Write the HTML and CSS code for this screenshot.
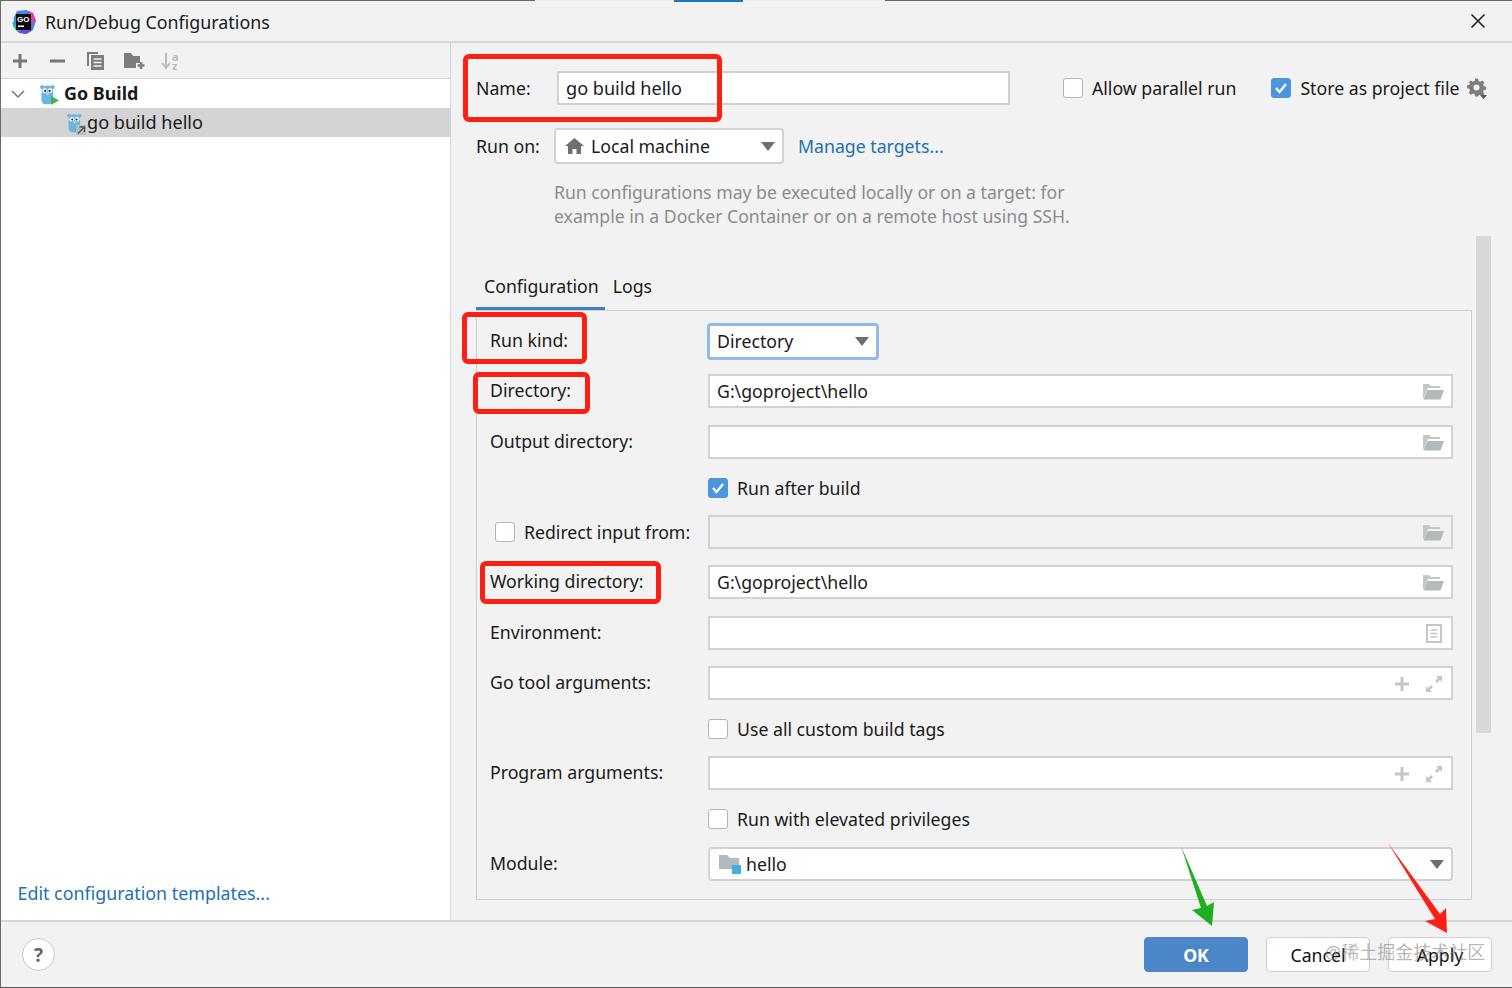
FILE: index.html
```html
<!DOCTYPE html>
<html lang="en">
<head>
<meta charset="utf-8">
<title>Run/Debug Configurations</title>
<link rel="stylesheet" href="styles.css">
</head>
<body>
<svg class="defs" width="0" height="0" aria-hidden="true">
  <defs>
    <symbol id="folder" viewBox="0 0 22 17"><path d="M1 1h6l2 2h9v2H6L2 15H1z" fill="#c3c7ca"/><path d="M5.500 7H22l-3.500 9.500H1.500z" fill="#b4b9bc"/></symbol>
    <symbol id="gopher" viewBox="0 0 20 24"><path d="M3.500 6C1 5 .5 1.500 3 1c1.200-.2 2.200.4 2.800 1.300C7.800 1.300 12 1.300 14 2.300 14.600 1.400 15.600.8 16.800 1c2.500.5 2 4-.5 5 .7 4 .7 9 .2 13-.5 3.500-2.500 4.500-6.800 4.500S3.500 22.500 3 19C2.600 15 2.800 10 3.500 6z" fill="#6db6e4"/><circle cx="6.800" cy="7.500" r="2.800" fill="#fff"/><circle cx="13" cy="7.500" r="2.800" fill="#fff"/><circle cx="7.300" cy="7.800" r="1.300" fill="#1c2530"/><circle cx="12.500" cy="7.800" r="1.300" fill="#1c2530"/><rect x="8.800" y="10" width="2.400" height="2.200" fill="#e8dcc8"/></symbol>
    <symbol id="caret" viewBox="0 0 14 9"><path d="M0 0h14L7 9z" fill="#6e6e6e"/></symbol>
    <symbol id="plus" viewBox="0 0 16 16"><path d="M8 1v14M1 8h14" stroke="currentColor" stroke-width="3"/></symbol>
    <symbol id="expand" viewBox="0 0 18 18"><path d="M11 1h6v6l-2-2-3 3-2-2 3-3zM7 17H1v-6l2 2 3-3 2 2-3 3z" fill="#c4c7c9"/></symbol>
  </defs>
</svg>
<div class="top-strip seg-a"></div>
<div class="top-strip seg-b"></div>
<div class="top-strip seg-c"></div>
<div class="window">
  <header class="titlebar">
    <svg class="logo" width="24" height="24" viewBox="0 0 24 24"><path d="M5 1l9-1 7 3 3 8-3 9-6 4-8-1-6-7 1-9z" fill="#3a8ce8"/><path d="M14 0l7 3 3 8-4 3-4-12z" fill="#e63fa0"/><path d="M20 14l-1 7-6 3-7-2z" fill="#7b3fe0"/><path d="M0 12l3 7 3 3 2-6z" fill="#2fb8a0"/><rect x="4" y="4" width="15" height="16" fill="#0b0b0b"/><text x="5" y="11.500" class="logo-text">GO</text><rect x="6" y="15.500" width="6" height="1.500" fill="#fff"/></svg>
    <span class="title">Run/Debug Configurations</span>
    <svg class="close" width="16" height="16" viewBox="0 0 16 16"><path d="M1.500 1.500l13 13M14.500 1.500l-13 13" stroke="#222" stroke-width="1.600"/></svg>
  </header>
  <div class="main">
    <aside class="sidebar">
      <div class="toolbar">
        <svg class="tool-plus" width="16" height="16"><use href="#plus"/></svg>
        <svg class="tool-minus" width="16" height="16" viewBox="0 0 16 16"><path d="M0 8h15" stroke="#777" stroke-width="3"/></svg>
        <svg class="tool-copy" width="19" height="20" viewBox="0 0 19 20"><path d="M1 1h11v2H3v12H1z" fill="#7d7d7d"/><path d="M5 4h13v15H5z" fill="#7d7d7d"/><path d="M7.500 8h8M7.500 11.500h8M7.500 15h8" stroke="#f2f2f2" stroke-width="1.600"/></svg>
        <svg class="tool-folder" width="22" height="18" viewBox="0 0 22 18"><path d="M0 1h7l2 3h7v7h-4v5H0z" fill="#7d7d7d"/><path d="M17 10v7M13.500 13.500h7" stroke="#7d7d7d" stroke-width="2.500"/></svg>
        <span class="tool-sort"><svg width="11" height="20" viewBox="0 0 11 20"><path d="M5 2v15M1 12l4 5 4-5" stroke="#bcbcbc" stroke-width="2" fill="none"/></svg><span class="sort-letters"><span>a</span><span>z</span></span></span>
      </div>
      <div class="tree-row tree-parent">
        <svg class="chevron" width="14" height="9" viewBox="0 0 14 9"><path d="M1 1l6 6 6-6" stroke="#777" stroke-width="1.500" fill="none"/></svg>
        <span class="gopher-wrap"><svg width="17" height="21"><use href="#gopher"/></svg><svg class="go-play" width="8" height="9" viewBox="0 0 8 9"><path d="M0 0l8 4.500L0 9z" fill="#4cb050"/></svg></span>
        <strong class="tree-label">Go Build</strong>
      </div>
      <div class="tree-row tree-child">
        <span class="gopher-wrap"><svg width="17" height="20"><use href="#gopher"/></svg><svg class="go-link" width="10" height="10" viewBox="0 0 10 10"><rect width="10" height="10" fill="#b9bcbf"/><path d="M2 8.500l6-6M3.500 2h5v5" stroke="#555" stroke-width="1.500" fill="none"/></svg></span>
        <span class="tree-label">go build hello</span>
      </div>
      <a class="templates link">Edit configuration templates...</a>
    </aside>
    <section class="content">
      <div class="name-row">
        <label class="name-label">Name:</label>
        <div class="field name-field">go build hello</div>
        <span class="check"></span><span class="check-label parallel">Allow parallel run</span>
        <span class="check checked"><svg width="14" height="12" viewBox="0 0 14 12"><path d="M2 6l3.500 4L12 2" stroke="#fff" stroke-width="2.200" fill="none"/></svg></span>
        <span class="check-label">Store as project file</span>
        <svg class="gear" width="20" height="21" viewBox="0 0 20 21"><path d="M8 0h3l.6 2.600 1.700.7L15.600 2l2.100 2.100-1.300 2.300.7 1.700 2.600.6v3l-2.600.6-.7 1.700 1.300 2.300-2.100 2.100-2.300-1.300-1.700.7L11 19H8l-.6-2.600-1.700-.7L3.400 17l-2.100-2.100 1.300-2.300-.7-1.700L-.7 10.300v-3l2.600-.6.7-1.700L1.300 4.100 3.400 2l2.300 1.300 1.700-.7z" fill="#7d7d7d" transform="translate(.5 .5) scale(.95)"/><circle cx="9.500" cy="9.500" r="3" fill="#f2f2f2"/><path d="M13 17h7l-3.500 4z" fill="#555"/></svg>
      </div>
      <div class="run-row">
        <label class="run-label">Run on:</label>
        <div class="combo run-combo">
          <svg class="home" width="19" height="16" viewBox="0 0 19 16"><path d="M9.500 0L19 8h-3v8h-4.500v-5h-4v5H3V8H0z" fill="#6e6e6e"/></svg>
          <span class="combo-text">Local machine</span>
          <svg width="14" height="9"><use href="#caret"/></svg>
        </div>
        <a class="link manage">Manage targets...</a>
      </div>
      <p class="hint">Run configurations may be executed locally or on a target: for<br>example in a Docker Container or on a remote host using SSH.</p>
      <div class="tabs"><span class="tab active">Configuration</span><span class="tab">Logs</span></div>
      <div class="scrollbar"></div>
      <div class="panel">
        <div class="form">
          <label>Run kind:</label>
          <div class="combo kind-combo"><span class="combo-text">Directory</span><svg width="14" height="9"><use href="#caret"/></svg></div>
          <label>Directory:</label>
          <div class="field wide">G:\goproject\hello<svg class="f-icon" width="22" height="17"><use href="#folder"/></svg></div>
          <label>Output directory:</label>
          <div class="field wide"><svg class="f-icon" width="22" height="17"><use href="#folder"/></svg></div>
          <span></span>
          <div class="check-row"><span class="check checked"><svg width="14" height="12" viewBox="0 0 14 12"><path d="M2 6l3.500 4L12 2" stroke="#fff" stroke-width="2.200" fill="none"/></svg></span><span>Run after build</span></div>
          <div class="redirect"><span class="check"></span><span>Redirect input from:</span></div>
          <div class="field wide disabled"><svg class="f-icon" width="22" height="17"><use href="#folder"/></svg></div>
          <label>Working directory:</label>
          <div class="field wide">G:\goproject\hello<svg class="f-icon" width="22" height="17"><use href="#folder"/></svg></div>
          <label>Environment:</label>
          <div class="field wide"><svg class="f-icon doc" width="16" height="19" viewBox="0 0 16 19"><path d="M0 0h16v19H0z" fill="#c4c7c9"/><path d="M2 2h12v15H2z" fill="#fff"/><path d="M4.500 6h7M4.500 9.500h7M4.500 13h7" stroke="#c4c7c9" stroke-width="1.500"/></svg></div>
          <label>Go tool arguments:</label>
          <div class="field wide"><svg class="f-plus" width="16" height="16"><use href="#plus"/></svg><svg class="f-expand" width="18" height="18"><use href="#expand"/></svg></div>
          <span></span>
          <div class="check-row"><span class="check"></span><span>Use all custom build tags</span></div>
          <label>Program arguments:</label>
          <div class="field wide"><svg class="f-plus" width="16" height="16"><use href="#plus"/></svg><svg class="f-expand" width="18" height="18"><use href="#expand"/></svg></div>
          <span></span>
          <div class="check-row"><span class="check"></span><span>Run with elevated privileges</span></div>
          <label>Module:</label>
          <div class="combo module-combo">
            <svg class="module-icon" width="22" height="20" viewBox="0 0 22 20"><path d="M0 1h8l3 3h9v11H0z" fill="#b4b9bc"/><rect x="13" y="11" width="9" height="9" fill="#3fb1dc"/></svg>
            <span class="combo-text">hello</span>
            <svg width="14" height="9"><use href="#caret"/></svg>
          </div>
        </div>
      </div>
    </section>
  </div>
  <footer class="footer">
    <span class="help">?</span>
    <button class="btn primary">OK</button>
    <button class="btn">Cancel</button>
    <button class="btn">Apply</button>
  </footer>
  <div class="mark mark-name"></div>
  <div class="mark mark-kind"></div>
  <div class="mark mark-dir"></div>
  <div class="mark mark-work"></div>
  <svg class="arrows" width="1512" height="988" viewBox="0 0 1512 988">
    <path d="M1181 846L1207 906 1214 902 1212 926 1192 910 1201 908z" fill="#1fae1c"/>
    <path d="M1388 843L1440 914 1446 908 1447 933 1425 921 1435 919z" fill="#fb1f14"/>
  </svg>
  <div class="watermark">@稀土掘金技术社区</div>
</div>
</body>
</html>
```
FILE: styles.css
```css
* { box-sizing: border-box; }
html, body { margin: 0; height: 100%; }
body { position: relative; font-family: "Noto Sans", "Open Sans", "Noto Sans CJK SC", sans-serif; font-size: 17.7px; color: #1a1a1a; background: #f2f2f2; overflow: hidden; }
.defs { position: absolute; }
.window { position: relative; width: 1512px; height: 988px; display: flex; flex-direction: column; border-top: 1px solid #6a6a6a; border-left: 1px solid #6a6a6a; border-bottom: 1px solid #555; background: #f2f2f2; overflow: hidden; }
.titlebar { height: 42px; flex: none; display: flex; align-items: center; padding: 2px 26px 0 11px; border-bottom: 2px solid #d6d6d6; }
.logo { margin-right: 9px; }
.logo-text { font: 700 8px "Liberation Sans", sans-serif; fill: #fff; }
.title { flex: 1; line-height: 1; font-size: 17.85px; margin-top: 1px; }
.close { flex: none; margin-top: -2px; }
.main { flex: 1; display: flex; min-height: 0; }
.sidebar { width: 450px; flex: none; background: #fff; border-right: 1px solid #d4d4d4; display: flex; flex-direction: column; }
.toolbar { height: 36px; flex: none; background: #f2f2f2; border-bottom: 1px solid #d4d4d4; display: flex; align-items: center; padding-left: 11px; color: #777; }
.tool-minus { margin-left: 22px; }
.tool-copy { margin-left: 20px; }
.tool-folder { margin-left: 19px; }
.tool-sort { margin-left: 15px; display: flex; gap: 0; align-items: center; }
.sort-letters { display: flex; flex-direction: column; font-size: 11px; line-height: 9px; font-weight: 700; color: #bcbcbc; }
.tree-row { height: 29px; flex: none; display: flex; align-items: center; }
.tree-parent { padding-left: 10px; padding-top: 1px; }
.tree-child { background: #d4d4d4; padding-left: 65px; }
.chevron { margin-right: 14px; }
.gopher-wrap { position: relative; display: flex; margin-right: 5px; }
.go-play { position: absolute; right: -3px; bottom: 0; }
.go-link { position: absolute; right: -3px; bottom: -2px; }
.tree-child .gopher-wrap { margin-right: 4px; }
.tree-parent .tree-label { margin-left: 3px; }
.tree-label { line-height: 1; font-size: 18.1px; }
.tree-parent .tree-label { font-size: 17.9px; }
.link { color: #2470b3; }
.templates { margin-top: auto; margin-bottom: 17px; padding-left: 16.500px; line-height: 20px; font-size: 17.85px; }
.content { flex: 1; position: relative; display: flex; flex-direction: column; padding-left: 25px; min-width: 0; }
.name-row { display: flex; align-items: center; height: 34px; margin-top: 28px; }
.name-label { width: 81px; }
.name-field { width: 453px; height: 34px; margin-right: 53px; font-size: 18.1px; padding-left: 7px; }
.field { background: #fff; border: 2px solid #d2d2d2; padding-left: 7px; display: flex; align-items: center; position: relative; white-space: nowrap; }
.check { width: 20px; height: 20px; flex: none; background: #fff; border: 1.500px solid #b5b5b5; border-radius: 3px; display: inline-flex; align-items: center; justify-content: center; }
.check.checked { background: #4a97e0; border-color: #4a97e0; }
.check-label { margin-left: 9px; margin-right: 35px; }
.name-row .check-label:last-of-type { margin-right: 8px; }
.run-row { display: flex; align-items: center; height: 36px; margin-top: 23px; }
.run-label { width: 78px; }
.combo { background: #fff; border: 2px solid #d2d2d2; border-radius: 4px; display: flex; align-items: center; padding: 0 7px 0 9px; }
.combo-text { flex: 1; white-space: nowrap; }
.run-combo { width: 230px; height: 36px; }
.home { margin-right: 7px; }
.manage { margin-left: 14px; }
.hint { margin: 16px 0 0 78px; color: #8c8c8c; line-height: 24px; font-size: 17.65px; }
.tabs { display: flex; margin-top: 45px; height: 46px; align-items: flex-start; }
.tab { padding: 0 14px 0 8px; line-height: 26px; height: 37px; }
.tab.active { border-bottom: 3px solid #3f80c4; padding-right: 6px; }
.tab:last-child { padding-left: 8px; }
.scrollbar { position: absolute; right: 21px; top: 193px; width: 15px; height: 497px; background: #d8d8d8; }
.panel { margin-top: -9px; width: 996px; height: 590px; border: 1.500px solid #cfcfcf; padding: 5px 17px 0 13px; }
.form { display: grid; grid-template-columns: 218px 745px; grid-template-rows: 50px 50px 52px 40px 48px 52px 50px 50px 42px 46px 46px 44px; align-items: center; }
.form label { line-height: 1; margin-top: -1px; }
.wide { height: 34px; }
.disabled { background: #f2f2f2; }
.f-icon { position: absolute; right: 7px; top: 7px; }
.f-icon.doc { right: 9px; top: 6px; }
.f-plus { position: absolute; right: 41px; top: 8px; color: #c4c7c9; width: 16px; }
.f-expand { position: absolute; right: 8px; top: 7px; }
.check-row { display: flex; align-items: center; gap: 9px; }
.redirect { display: flex; align-items: center; gap: 9px; padding-left: 5px; }
.kind-combo { width: 172px; height: 37px; margin-left: -1px; border: 3px solid #8fbbe8; padding-left: 7px; }
.module-combo { height: 34px; padding-left: 9px; }
.module-icon { margin-right: 5px; }
.footer { height: 67px; flex: none; border-top: 2px solid #d6d6d6; display: flex; align-items: center; padding: 0 20px 0 21px; }
.help { width: 33px; height: 33px; border-radius: 50%; background: #fff; border: 1.500px solid #c8c8c8; display: flex; align-items: center; justify-content: center; font-weight: 700; color: #666; margin-right: auto; font-size: 19px; }
.btn { width: 104px; height: 35px; margin-left: 18px; background: #fff; border: 1.500px solid #cfcfcf; border-radius: 4px; font: inherit; color: #111; padding: 0; }
.btn.primary { background: #4a86c8; border-color: #4a86c8; color: #fff; font-weight: 700; }
.top-strip { position: absolute; top: 0; height: 2px; z-index: 2; }
.seg-a { left: 535px; width: 139px; height: 1px; background: #ededed; }
.seg-b { left: 674px; width: 69px; background: #1b78c9; }
.seg-c { left: 743px; width: 142px; height: 1px; background: #ededed; }
.mark { position: absolute; border: 5px solid #fb1f14; border-radius: 6px; }
.mark-name { left: 462px; top: 53px; width: 259px; height: 68px; }
.mark-kind { left: 461px; top: 311px; width: 125px; height: 52px; }
.mark-dir { left: 472px; top: 371px; width: 117px; height: 42px; }
.mark-work { left: 479px; top: 560px; width: 181px; height: 43px; }
.arrows { position: absolute; left: -1px; top: -1px; pointer-events: none; }
.watermark { position: absolute; left: 1324px; top: 939px; font-size: 18px; line-height: 24px; color: rgba(120,120,120,.55); white-space: nowrap; }
```
